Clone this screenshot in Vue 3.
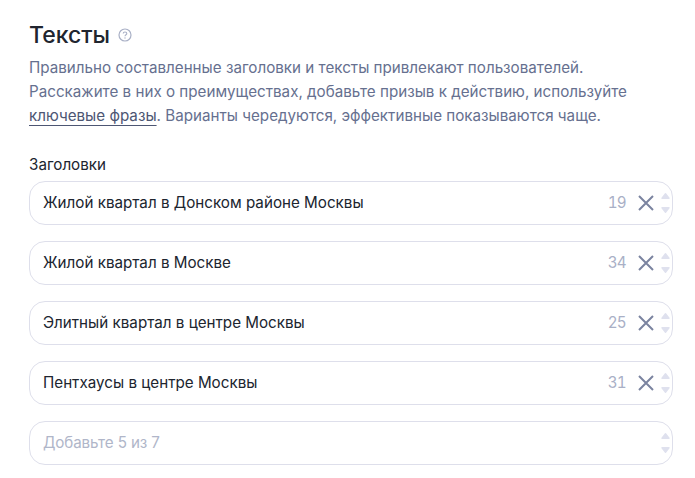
<script setup>
const fields = [
  { text: 'Жилой квартал в Донском районе Москвы', count: 19 },
  { text: 'Жилой квартал в Москве', count: 34 },
  { text: 'Элитный квартал в центре Москвы', count: 25 },
  { text: 'Пентхаусы в центре Москвы', count: 31 },
  { text: '', count: null, placeholder: 'Добавьте 5 из 7' },
]
</script>

<template>
  <main class="page">
    <header class="head">
      <h1 class="title">Тексты</h1>
      <svg class="help" viewBox="0 0 14 14" width="14" height="14" fill="none">
        <circle cx="7" cy="7" r="6" stroke="#a9b0c6" stroke-width="1.2" />
        <path d="M5.2 5.6C5.2 4.6 6 4 7 4s1.8.6 1.8 1.5c0 1.3-1.8 1.3-1.8 2.8" stroke="#a9b0c6" stroke-width="1.1" />
        <circle cx="7" cy="10" r=".7" fill="#a9b0c6" />
      </svg>
    </header>
    <p class="intro">
      Правильно составленные заголовки и тексты привлекают пользователей.<br />
      Расскажите в них о преимуществах, добавьте призыв к действию, используйте<br />
      <a class="link">ключевые фразы</a>. Варианты чередуются, эффективные показываются чаще.
    </p>
    <div class="label">Заголовки</div>
    <div class="fields">
      <div v-for="(f, i) in fields" :key="i" class="field">
        <span v-if="f.text" class="value">{{ f.text }}</span>
        <span v-else class="placeholder">{{ f.placeholder }}</span>
        <span v-if="f.count" class="count">{{ f.count }}</span>
        <svg v-if="f.count" class="clear" viewBox="0 0 16 16" width="16" height="16" fill="none">
          <path d="M1 1l14 14M15 1L1 15" stroke="#7b84a0" stroke-width="2" />
        </svg>
        <span class="spin">
          <svg viewBox="0 0 9 6" width="9" height="6"><path d="M4.5 .8L8 5.2H1z" fill="#dfe1ee" stroke="#dfe1ee" stroke-width="1.4" stroke-linejoin="round" /></svg>
          <svg viewBox="0 0 9 6" width="9" height="6"><path d="M4.5 5.2L8 .8H1z" fill="#dfe1ee" stroke="#dfe1ee" stroke-width="1.4" stroke-linejoin="round" /></svg>
        </span>
      </div>
    </div>
  </main>
</template>

<style>
html, body { margin: 0; background: #fff; }
</style>

<style scoped>
.page {
  width: 695px;
  height: 478px;
  box-sizing: border-box;
  padding: 19px 22px 0 29px;
  overflow: hidden;
  font-family: "Inter", "Roboto", "Liberation Sans", sans-serif;
  background: #fff;
}
.head { display: flex; align-items: center; gap: 8px; height: 32px; }
.title { margin: 0; font-size: 23px; line-height: 32px; font-weight: 500; color: #20252f; }
.intro { margin: 5px 0 0; font-size: 15.2px; line-height: 24px; color: #66708f; }
.link { color: #4d5673; text-decoration: underline; text-underline-offset: 4px; }
.label { margin-top: 25px; font-size: 15.2px; line-height: 24px; color: #20252f; }
.fields { margin-top: 4px; display: flex; flex-direction: column; gap: 16px; }
.field {
  height: 44px;
  box-sizing: border-box;
  border: 1px solid #dedfeb;
  border-radius: 16px;
  display: flex;
  align-items: center;
  padding: 0 2px 0 13px;
  font-size: 15.2px;
}
.value { flex: 1; padding-bottom: 2px; color: #20252f; }
.placeholder { flex: 1; padding-bottom: 2px; color: #b0b6c9; letter-spacing: -.12px; }
.count {
  margin-right: 12px;
  padding-bottom: 2px;
  color: #a9b0c6;
  font-variant-numeric: tabular-nums;
  letter-spacing: -.7px;
}
.clear { margin-right: 7px; }
.spin { display: flex; flex-direction: column; gap: 8px; }
</style>
